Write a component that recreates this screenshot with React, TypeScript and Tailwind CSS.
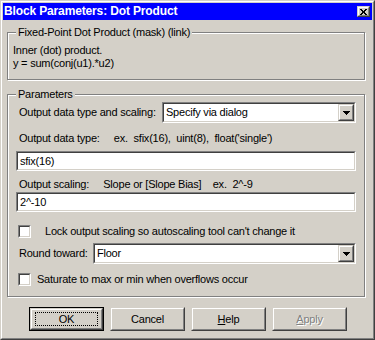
import React from "react";

function Sunken({ className = "", children }: { className?: string; children?: React.ReactNode }) {
  return (
    <div className={`border border-t-[#808080] border-l-[#808080] border-r-white border-b-white ${className}`}>
      <div className="h-full border border-t-[#404040] border-l-[#404040] border-r-[#d4d0c8] border-b-[#d4d0c8] bg-white flex items-center">
        {children}
      </div>
    </div>
  );
}

function Raised({ className = "", children }: { className?: string; children?: React.ReactNode }) {
  return (
    <div className={`border border-t-[#d4d0c8] border-l-[#d4d0c8] border-r-[#404040] border-b-[#404040] ${className}`}>
      <div className="h-full border border-t-white border-l-white border-r-[#808080] border-b-[#808080] bg-[#d4d0c8] flex items-center justify-center">
        {children}
      </div>
    </div>
  );
}

function Arrow() {
  return (
    <svg width="7" height="4" viewBox="0 0 7 4">
      <path d="M0 0h7v1H0zM1 1h5v1H1zM2 2h3v1H2zM3 3h1v1H3z" fill="#000" />
    </svg>
  );
}

function Combo({ className = "", text }: { className?: string; text: string }) {
  return (
    <Sunken className={`h-[21px] ${className}`}>
      <span className="flex-1 pl-[2px] whitespace-pre">{text}</span>
      <Raised className="w-[16px] h-[17px]">
        <Arrow />
      </Raised>
    </Sunken>
  );
}

function Check() {
  return (
    <div className="w-[13px] h-[13px] shrink-0 border border-t-[#808080] border-l-[#808080] border-r-white border-b-white">
      <div className="h-full border border-t-[#404040] border-l-[#404040] border-r-[#d4d0c8] border-b-[#d4d0c8] bg-white" />
    </div>
  );
}

function Button({ children, def = false }: { children: React.ReactNode; def?: boolean }) {
  if (def) {
    return (
      <div className="w-[75px] h-[24px] border border-black">
        <Raised className="h-full">
          <div className="w-[63px] h-[14px] border border-dotted border-black flex items-center justify-center">{children}</div>
        </Raised>
      </div>
    );
  }
  return <Raised className="w-[75px] h-[24px]">{children}</Raised>;
}

export default function App() {
  return (
    <div className="w-[375px] h-[340px] bg-[#d4d0c8] border border-t-[#d4d0c8] border-l-[#d4d0c8] border-r-[#404040] border-b-[#404040] text-[11px] leading-[13px] text-black tracking-[-0.22px] font-['Liberation_Sans',Arial,sans-serif]">
      <div className="h-full border border-t-white border-l-white border-r-[#808080] border-b-[#808080] p-px flex flex-col">
        <div className="h-[17px] bg-[#0000ff] flex items-center justify-between pl-[1px] pr-[2px]">
          <span className="text-white font-bold text-[12px] tracking-[-0.14px]">Block Parameters: Dot Product</span>
          <Raised className="w-[13px] h-[11px]">
            <svg width="7" height="6" viewBox="0 0 7 6">
              <path d="M0 0h2v1H0zM5 0h2v1H5zM1 1h2v1H1zM4 1h2v1H4zM2 2h3v1H2zM2 3h3v1H2zM1 4h2v1H1zM4 4h2v1H4zM0 5h2v1H0zM5 5h2v1H5z" fill="#000" />
            </svg>
          </Raised>
        </div>

        <div className="relative mt-[12px] ml-[4px] w-[358px] h-[48px] border border-[#808080] shadow-[inset_1px_1px_0_#fff,1px_1px_0_#fff] pt-[11px] pl-[5px]">
          <span className="absolute top-[-7px] left-[8px] px-[2px] bg-[#d4d0c8]">Fixed-Point Dot Product (mask) (link)</span>
          <div>Inner (dot) product.</div>
          <div>y = sum(conj(u1).*u2)</div>
        </div>

        <div className="relative mt-[14px] ml-[4px] w-[358px] h-[203px] border border-[#808080] shadow-[inset_1px_1px_0_#fff,1px_1px_0_#fff] px-[8px] flex flex-col">
          <span className="absolute top-[-7px] left-[8px] px-[2px] bg-[#d4d0c8]">Parameters</span>

          <div className="mt-[7px] flex items-center justify-between">
            <span className="ml-[3px]">Output data type and scaling:</span>
            <Combo className="w-[194px]" text="Specify via dialog" />
          </div>

          <div className="mt-[9px] ml-[3px] whitespace-pre">Output data type:     ex.  sfix(16),  uint(8),  float('single')</div>
          <Sunken className="mt-[6px] h-[20px]">
            <span className="pl-[2px]">sfix(16)</span>
          </Sunken>

          <div className="mt-[7px] ml-[3px] whitespace-pre">Output scaling:     Slope or [Slope Bias]    ex.  2^-9</div>
          <Sunken className="mt-[1px] h-[20px]">
            <span className="pl-[2px]">2^-10</span>
          </Sunken>

          <div className="mt-[13px] ml-[2px] flex items-center">
            <Check />
            <span className="ml-[14px]">Lock output scaling so autoscaling tool can't change it</span>
          </div>

          <div className="mt-[5px] flex items-center justify-between">
            <span className="ml-[3px]">Round toward:</span>
            <Combo className="w-[263px]" text="Floor" />
          </div>

          <div className="mt-[9px] ml-[2px] flex items-center">
            <Check />
            <span className="ml-[6px]">Saturate to max or min when overflows occur</span>
          </div>
        </div>

        <div className="mt-[10px] pl-[26px] flex gap-[6px]">
          <Button def>OK</Button>
          <Button>Cancel</Button>
          <Button>
            <span><span className="underline">H</span>elp</span>
          </Button>
          <Button>
            <span className="text-[#808080] [text-shadow:1px_1px_0_#fff]"><span className="underline">A</span>pply</span>
          </Button>
        </div>
      </div>
    </div>
  );
}
